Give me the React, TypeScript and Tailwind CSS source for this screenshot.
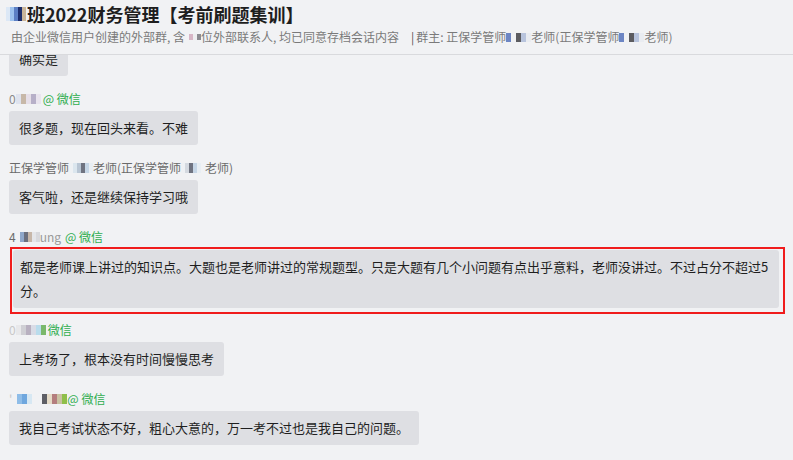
import React from "react";

// pixelated name fragments, as in the screenshot (names are masked)
function Blur({ cells, h = "h-[10px]", w = "w-[4px]" }: { cells: string[]; h?: string; w?: string }) {
  return (
    <span className="inline-flex items-center align-middle blur-[0.4px]">
      {cells.map((c, i) => (
        <span key={i} className={`inline-block ${w} ${h} ${c}`} />
      ))}
    </span>
  );
}

function WxTag() {
  return <span className="text-[#2fae4f]">@ 微信</span>;
}

function Message({
  name,
  text,
  highlight,
}: {
  name: React.ReactNode;
  text: React.ReactNode;
  highlight?: boolean;
}) {
  const bubble = (
    <div
      className={
        highlight
          ? "w-[766px] rounded-[3px] bg-[#dedfe3] pl-[7px] pr-[10px] py-[5px] text-[13px] leading-[24px] text-[#1f1f1f]"
          : "w-fit rounded-[3px] bg-[#dedfe3] px-[10px] py-[5px] text-[13px] leading-[24px] text-[#1f1f1f]"
      }
    >
      {text}
    </div>
  );
  return (
    <div className={highlight ? "-mb-[7px] flex flex-col" : "flex flex-col"}>
      <div className="flex h-[16px] items-center text-[12px] leading-[16px] text-[#8a8a8a]">{name}</div>
      {highlight ? (
        <div className="ml-[1px] mt-[2px] w-[775px] border-2 border-[#f01c1c] pt-[1px] pr-[5px] pb-[4px] pl-[1px]">
          {bubble}
        </div>
      ) : (
        <div className="mt-[4px]">{bubble}</div>
      )}
    </div>
  );
}

export default function App() {
  const font = { fontFamily: '"Noto Sans CJK SC", "Noto Sans", sans-serif' };
  return (
    <div className="flex h-[460px] w-[793px] flex-col overflow-hidden bg-[#f1f2f4]" style={font}>
      {/* Header */}
      <div className="relative z-10 shrink-0 border-b border-[#d9dadd] bg-[#f1f2f4] pt-[2px] pb-[8px]">
        <div className="flex items-center pl-[6px] text-[18px] font-bold leading-[24px] text-[#1e1e1e]">
          <Blur
            h="h-[14px]"
            cells={["bg-[#dce8f6]", "bg-[#9ec3ee]", "bg-[#5c7fc4]", "bg-[#1d2f6e]", "bg-[#c8b59a]"]}
          />
          <span className="ml-[1px]">班2022财务管理【考前刷题集训】</span>
        </div>
        <div className="mt-[2px] flex items-center whitespace-nowrap pl-[11px] text-[12px] leading-[18px] text-[#7a7a7a]">
          <span>由企业微信用户创建的外部群, 含</span>
          <Blur h="h-[6px]" cells={["bg-[#f3f3f5]", "bg-[#d7b6c6]", "bg-[#eeeef0]", "bg-[#8b8b90]"]} />
          <span>位外部联系人, 均已同意存档会话内容</span>
          <span className="ml-[12px] text-[#555]">|</span>
          <span className="ml-[2px]">群主: 正保学管师</span>
          <Blur h="h-[9px]" w="w-[5px]" cells={["bg-[#6d86c4]", "bg-[#f1f2f4]", "bg-[#5c5c60]", "bg-[#b8c4dd]", "bg-[#e9ecf1]"]} />
          <span>老师(正保学管师</span>
          <Blur h="h-[9px]" w="w-[5px]" cells={["bg-[#6d86c4]", "bg-[#f1f2f4]", "bg-[#5c5c60]", "bg-[#b8c4dd]", "bg-[#e9ecf1]"]} />
          <span>老师)</span>
        </div>
      </div>

      {/* Messages */}
      <div className="flex flex-1 flex-col gap-[15px] overflow-hidden pl-[9px]">
        <div className="-mt-[13px] w-fit rounded-[3px] bg-[#dedfe3] px-[10px] py-[5px] text-[13px] leading-[24px] text-[#1f1f1f]">
          确实是
        </div>

        <Message
          name={
            <>
              <span>0</span>
              <Blur w="w-[5px]" cells={["bg-[#dfe3ee]", "bg-[#c7b8a8]", "bg-[#e6dfe8]", "bg-[#b7b0c8]", "bg-[#e9e4ee]"]} />
              <span className="ml-[2px]" />
              <WxTag />
            </>
          }
          text="很多题，现在回头来看。不难"
        />

        <Message
          name={
            <span className="flex items-center text-[#6a6a6a]">
              正保学管师
              <Blur cells={["bg-[#eef1f4]", "bg-[#dbe6ee]", "bg-[#b9c6d4]", "bg-[#6f7380]", "bg-[#c6d6e6]", "bg-[#e8eef3]"]} />
              老师(正保学管师
              <Blur cells={["bg-[#eef1f4]", "bg-[#d4d9e0]", "bg-[#6f7380]", "bg-[#c6d6e6]", "bg-[#e8eef3]", "bg-[#f1f2f4]"]} />
              老师)
            </span>
          }
          text="客气啦，还是继续保持学习哦"
        />

        <Message
          highlight
          name={
            <>
              <span className="text-[#6a6a6a]">4</span>
              <Blur cells={["bg-[#f1f2f4]", "bg-[#8fa7c9]", "bg-[#6b6f7d]", "bg-[#c7b7a9]", "bg-[#e4e6ea]", "bg-[#d8d9dd]"]} />
              <span className="text-[#9a9a9a]">ung</span>
              <span className="ml-[4px]" />
              <WxTag />
            </>
          }
          text={
            <>
              <span className="whitespace-nowrap">
                都是老师课上讲过的知识点。大题也是老师讲过的常规题型。只是大题有几个小问题有点出乎意料，老师没讲过。不过占分不超过5
              </span>
              <br />
              分。
            </>
          }
        />

        <Message
          name={
            <>
              <span className="text-[#c8c8c8]">0</span>
              <Blur w="w-[5px]" cells={["bg-[#e8e8ea]", "bg-[#cfcfd4]", "bg-[#b8b0c0]", "bg-[#d9dce6]", "bg-[#b9dcec]", "bg-[#7ab86b]"]} />
              <span className="ml-[2px] text-[#2fae4f]">微信</span>
            </>
          }
          text="上考场了，根本没有时间慢慢思考"
        />

        <Message
          name={
            <>
              <span className="text-[#c8c8c8]">'</span>
              <Blur
                w="w-[5px]"
                cells={["bg-[#f1f2f4]", "bg-[#8fbde8]", "bg-[#6fa7de]", "bg-[#d7e8f3]", "bg-[#f1f2f4]", "bg-[#f1f2f4]", "bg-[#5e5f66]", "bg-[#e6dcc8]", "bg-[#b47e7e]", "bg-[#c9c2a2]", "bg-[#8fbf4a]"]}
              />
              <span className="text-[#2fae4f]">@ 微信</span>
            </>
          }
          text="我自己考试状态不好，粗心大意的，万一考不过也是我自己的问题。"
        />
      </div>
    </div>
  );
}
